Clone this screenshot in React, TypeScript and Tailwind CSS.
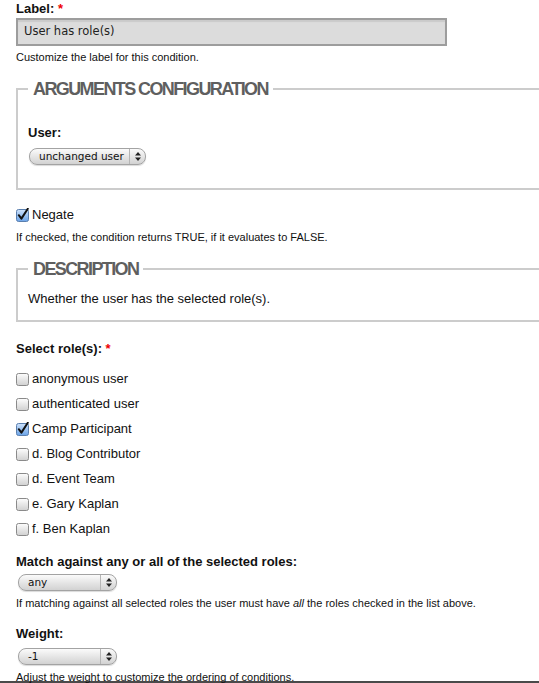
import React from 'react';

const sans = { fontFamily: '"Liberation Sans", Arial, sans-serif' };
const ui = { fontFamily: '"DejaVu Sans", Verdana, sans-serif' };

function Box({ checked = false }: { checked?: boolean }) {
  return (
    <svg width="14" height="14" viewBox="0 0 14 14" className="shrink-0">
      <defs>
        <linearGradient id="boxOff" x1="0" y1="0" x2="0" y2="1">
          <stop offset="0" stopColor="#fdfdfd" />
          <stop offset="1" stopColor="#d0d0d0" />
        </linearGradient>
        <linearGradient id="boxOn" x1="0" y1="0" x2="0" y2="1">
          <stop offset="0" stopColor="#cfe3fb" />
          <stop offset="1" stopColor="#6aa3e8" />
        </linearGradient>
      </defs>
      <rect
        x="0.5"
        y="1.5"
        width="12"
        height="12"
        rx="2"
        fill={checked ? 'url(#boxOn)' : 'url(#boxOff)'}
        stroke={checked ? '#5a7fae' : '#8a8a8a'}
      />
      {checked && (
        <path d="M2.8 7.2 L5.4 10.6 L11.8 0.8" fill="none" stroke="#111" strokeWidth="2" strokeLinecap="round" strokeLinejoin="round" />
      )}
    </svg>
  );
}

function Select({ value, width }: { value: string; width: string }) {
  return (
    <div
      className={`flex h-[17px] items-center rounded-[8px] border border-[#a3a3a3] bg-gradient-to-b from-[#fbfbfb] via-[#e6e6e6] to-[#d2d2d2] shadow-[0_1px_1px_rgba(0,0,0,0.15)] ${width}`}
    >
      <span className="flex-1 whitespace-nowrap pl-[9px] text-[10.5px] leading-none text-[#111]" style={ui}>
        {value}
      </span>
      <span className="flex h-full w-[16px] shrink-0 items-center justify-center border-l border-[#b5b5b5]">
        <svg width="6" height="9" viewBox="0 0 6 9">
          <path d="M3 0 L6 3.5 H0 Z M3 9 L6 5.5 H0 Z" fill="#222" />
        </svg>
      </span>
    </div>
  );
}

function Legend({ children }: { children: React.ReactNode }) {
  return (
    <legend
      className="px-[5px] text-[18px] font-bold leading-[20px] tracking-[-1.6px] text-[#5f5f5f]"
      style={sans}
    >
      {children}
    </legend>
  );
}

const roles = [
  { name: 'anonymous user', on: false },
  { name: 'authenticated user', on: false },
  { name: 'Camp Participant', on: true },
  { name: 'd. Blog Contributor', on: false },
  { name: 'd. Event Team', on: false },
  { name: 'e. Gary Kaplan', on: false },
  { name: 'f. Ben Kaplan', on: false },
];

export default function App() {
  return (
    <div className="h-[683px] w-[539px] overflow-hidden bg-white text-[#111]" style={sans}>
      <div className="pl-[16px] pt-[1px]">
        <div className="text-[13px] font-bold leading-[16px]">
          Label: <span className="text-[#e00]">*</span>
        </div>
        <div className="mt-[1px] flex h-[28px] w-[431px] items-center border-2 border-[#9d9d9d] bg-[#dcdcdc] pl-[6px] shadow-[inset_0_2px_1px_rgba(0,0,0,0.08)]">
          <span className="text-[11.5px] text-[#222]" style={ui}>User has role(s)</span>
        </div>
        <div className="mt-[4px] text-[11px] leading-[14px]">Customize the label for this condition.</div>

        <fieldset className="mt-[15px] w-[560px] border-2 border-[#cccccc] pb-[23px] pl-[10px]">
          <Legend>ARGUMENTS CONFIGURATION</Legend>
          <div className="mt-[26px] text-[13px] font-bold leading-[16px]">User:</div>
          <div className="mt-[7px] pl-[1px]">
            <Select value="unchanged user" width="w-[117px]" />
          </div>
        </fieldset>

        <label className="mt-[17px] flex items-center gap-[2px] text-[13px] leading-[16px]">
          <Box checked />
          Negate
        </label>
        <div className="mt-[7px] text-[11px] leading-[14px]">
          If checked, the condition returns TRUE, if it evaluates to FALSE.
        </div>

        <fieldset className="mt-[15px] w-[560px] border-2 border-[#cccccc] pb-[13px] pl-[10px]">
          <Legend>DESCRIPTION</Legend>
          <div className="mt-[12px] text-[13px] leading-[16px]">Whether the user has the selected role(s).</div>
        </fieldset>

        <div className="mt-[19px] text-[13px] font-bold leading-[16px]">
          Select role(s): <span className="text-[#e00]">*</span>
        </div>
        <div className="mt-[14px] flex flex-col gap-[9px]">
          {roles.map((r) => (
            <label key={r.name} className="flex items-center gap-[2px] text-[13px] leading-[16px]">
              <Box checked={r.on} />
              {r.name}
            </label>
          ))}
        </div>

        <div className="mt-[17px] text-[13px] font-bold leading-[16px]">
          Match against any or all of the selected roles:
        </div>
        <div className="mt-[4px] pl-[2px]">
          <Select value="any" width="w-[99px]" />
        </div>
        <div className="mt-[5px] text-[11px] leading-[14px]">
          If matching against all selected roles the user must have <em>all</em> the roles checked in the list above.
        </div>

        <div className="mt-[16px] text-[13px] font-bold leading-[16px]">Weight:</div>
        <div className="mt-[6px] pl-[2px]">
          <Select value="-1" width="w-[99px]" />
        </div>
        <div className="mt-[5px] text-[11px] leading-[14px]">
          Adjust the weight to customize the ordering of conditions.
        </div>
      </div>
      <div className="-mt-[3px] h-[2px] w-full bg-[#4a4a4a]" />
    </div>
  );
}
